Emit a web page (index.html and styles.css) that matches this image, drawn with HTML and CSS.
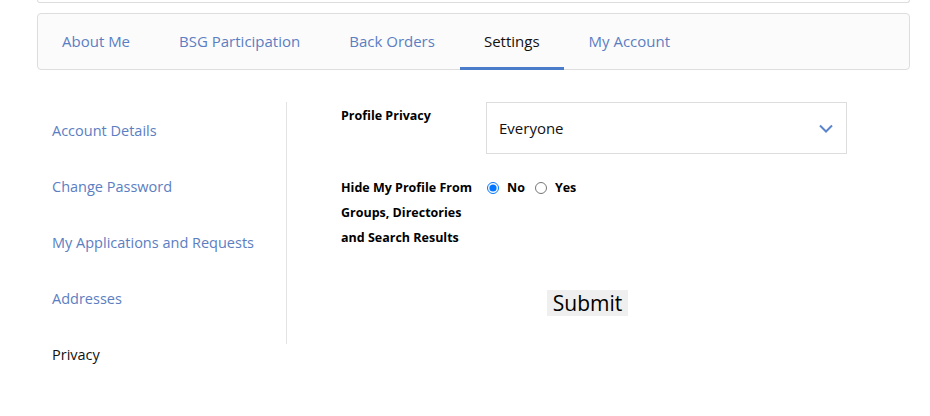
FILE: index.html
```html
<!DOCTYPE html>
<html>
<head>
<meta charset="utf-8">
<link rel="stylesheet" href="styles.css">
</head>
<body>
<div class="page">
  <div class="top-card"></div>
  <nav class="tabs">
    <a class="tab">About Me</a>
    <a class="tab">BSG Participation</a>
    <a class="tab">Back Orders</a>
    <a class="tab active">Settings</a>
    <a class="tab">My Account</a>
  </nav>
  <div class="content">
    <aside class="sidebar">
      <a class="side-link">Account Details</a>
      <a class="side-link">Change Password</a>
      <a class="side-link">My Applications and Requests</a>
      <a class="side-link">Addresses</a>
      <a class="side-link current">Privacy</a>
    </aside>
    <div class="divider"></div>
    <form class="form">
      <div class="row">
        <label class="label">Profile Privacy</label>
        <div class="select">
          <span>Everyone</span>
          <svg class="chev" width="14" height="9" viewBox="0 0 14 9"><path d="M1 1.5 L7 7.5 L13 1.5" fill="none" stroke="#5b84cc" stroke-width="2"/></svg>
        </div>
      </div>
      <div class="row row-radio">
        <label class="label label-multi">Hide My Profile From Groups, Directories and Search Results</label>
        <div class="radios">
          <label class="radio"><input type="radio" name="hide" checked> No</label>
          <label class="radio"><input type="radio" name="hide"> Yes</label>
        </div>
      </div>
      <div class="submit-row">
        <button type="button" class="submit">Submit</button>
      </div>
    </form>
  </div>
</div>
</body>
</html>
```
FILE: styles.css
```css
html, body {
  margin: 0;
  padding: 0;
  background: #fff;
}
body {
  font-family: "Open Sans", "Noto Sans", sans-serif;
}
.page {
  padding: 0 20px 0 37px;
}
.top-card {
  height: 2px;
  border: 1px solid #dddddd;
  border-top: none;
  border-radius: 0 0 4px 4px;
}
.tabs {
  margin-top: 10px;
  height: 57px;
  border: 1px solid #dddddd;
  border-radius: 4px;
  background: #fbfbfb;
  display: flex;
  box-sizing: border-box;
}
.tab {
  display: flex;
  align-items: center;
  padding: 0 24px;
  margin-right: 1px;
  font-size: 15px;
  color: #5b7ec2;
  border-bottom: 3px solid transparent;
  margin-bottom: -1px;
  padding-top: 1px;
}
.tab.active {
  color: #111;
  border-bottom-color: #4a7cc9;
}
.content {
  display: flex;
  margin-top: 32px;
}
.sidebar {
  width: 249px;
  display: flex;
  flex-direction: column;
  padding-top: 17px;
}
.side-link {
  font-size: 14.5px;
  color: #5b7ec2;
  height: 56px;
  padding-left: 15px;
  line-height: 24px;
}
.side-link.current {
  color: #111;
}
.divider {
  width: 1px;
  height: 242px;
  background: #e3e3e3;
}
.form {
  flex: 1;
  padding-left: 54px;
  font-size: 12.5px;
}
.row {
  display: flex;
  align-items: flex-start;
}
.label {
  width: 145px;
  font-weight: 700;
  color: #000;
  line-height: 25px;
}
.row:first-child .label {
  margin-top: 1px;
}
.select {
  width: 361px;
  height: 52px;
  box-sizing: border-box;
  border: 1px solid #dddddd;
  display: flex;
  align-items: center;
  justify-content: space-between;
  padding: 0 13px 0 12px;
  font-size: 15px;
  color: #111;
}
.row-radio {
  margin-top: 21px;
}
.radios {
  display: flex;
  gap: 9px;
  font-weight: 700;
  line-height: 25px;
}
.radio {
  display: flex;
  align-items: center;
}
.radio input {
  margin: 0 8px 0 1px;
  width: 12px;
  height: 12px;
}
.submit-row {
  display: flex;
  justify-content: center;
  margin-top: 40px;
  padding-right: 76px;
}
.submit {
  font-family: "Open Sans", sans-serif;
  font-size: 21px;
  background: #efefef;
  border: none;
  padding: 0 6px;
  color: #000;
  line-height: 26px;
}
```
